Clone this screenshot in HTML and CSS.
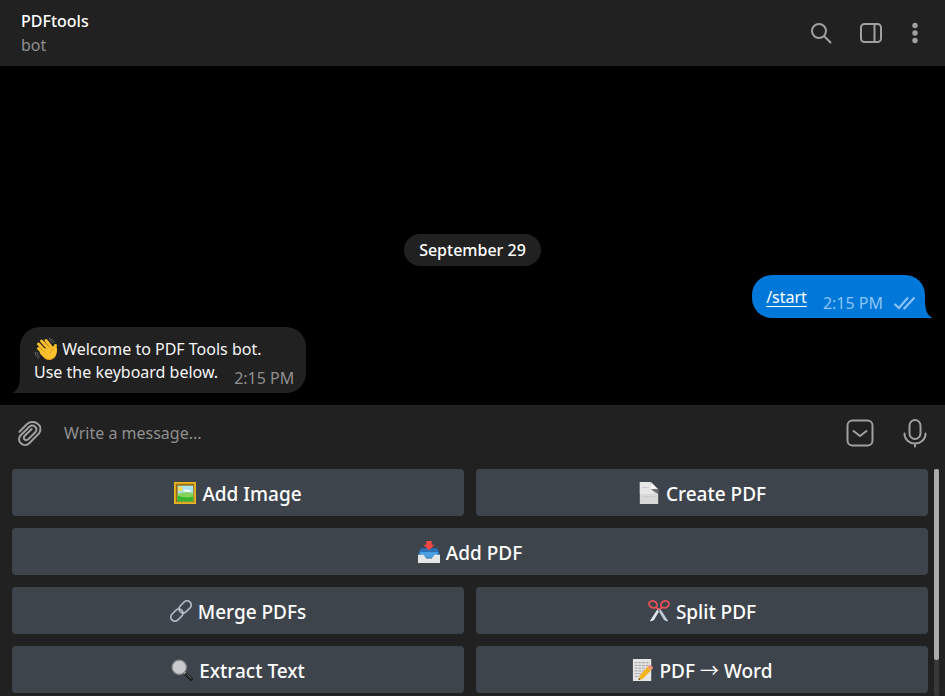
FILE: index.html
```html
<!DOCTYPE html>
<html lang="en">
<head>
<meta charset="utf-8">
<meta name="viewport" content="width=device-width, initial-scale=1">
<title>PDFtools</title>
<link rel="stylesheet" href="styles.css">
</head>
<body>
<header class="topbar">
  <div class="peer">
    <h1 class="peer-name">PDFtools</h1>
    <p class="peer-status">bot</p>
  </div>
  <div class="topbar-actions">
    <button class="icon-button" type="button" aria-label="Search">
      <svg class="icon" viewBox="0 0 24 24"><circle cx="10" cy="10" r="7"/><path d="M15.2 15.2 21.5 21.5"/></svg>
    </button>
    <button class="icon-button" type="button" aria-label="Toggle side panel">
      <svg class="icon" viewBox="0 0 24 24"><rect x="2" y="3" width="20" height="18" rx="3.500"/><path d="M15.500 3v18"/></svg>
    </button>
    <button class="icon-button icon-button-narrow" type="button" aria-label="More">
      <svg class="icon icon-solid" viewBox="0 0 24 24"><circle cx="12" cy="4.500" r="2.700"/><circle cx="12" cy="12" r="2.700"/><circle cx="12" cy="19.500" r="2.700"/></svg>
    </button>
  </div>
</header>

<main class="chat">
  <time class="date-pill">September 29</time>
  <article class="bubble bubble-out">
    <p class="bubble-text"><a class="command" href="#start">/start</a><span class="meta">2:15 PM<svg class="ticks" viewBox="0 0 24 16"><path d="M1.500 9l4.500 4L15 2.500M10.500 12.500l1 .8L21.500 2.500"/></svg></span></p>
    <svg class="tail" viewBox="0 0 18 18"><path d="M0 18h18v-.5C13 15 11 10 11 0H0z"/></svg>
  </article>
  <article class="bubble bubble-in">
    <p class="bubble-text"><svg class="emoji emoji-wave" viewBox="0 0 24 24">
      <g fill="none" stroke="#62625f" stroke-width="1"><path d="M15 1.500q4 .5 5.500 4M15.500 3.500q2.500.5 3.500 3M1 15q0 4 4 6.500M2.800 15q.3 3 2.700 4.800"/></g>
      <g stroke="#fbc02d" stroke-width="3" stroke-linecap="round" fill="none"><path d="M4.500 11.500 11 18M4.500 7 12 15M7.500 4 15 12M12 3.500 18 11"/><path d="M20 14.500Q19.500 11 21.500 8.500"/></g>
      <path fill="#fbc02d" d="M8 13 16 9l4 2.500 2.800-1.500q1 7-2 10.500-4 4-9 1.500Q9 20 5.500 16z"/>
      <path fill="none" stroke="#d58a14" stroke-width=".8" d="M6 10.500 10 14.700M9 7.700 13 12M12.500 6.500 16 10.500M16.500 16q.5-3 3-4.500M10 21q6 3.500 10.500-1"/>
    </svg> Welcome to PDF Tools bot.<br>Use the keyboard below.<span class="meta">2:15 PM</span></p>
    <svg class="tail" viewBox="0 0 18 18"><path d="M18 18H0v-.5C5 15 7 10 7 0h11z"/></svg>
  </article>
</main>

<form class="composer">
  <button class="icon-button" type="button" aria-label="Attach file">
    <svg class="icon icon-large" viewBox="0 0 28 28"><path d="M3.500 12.800 10.800 5.300C16.500-.5 28.500 5.500 23 14.500L13.500 24C8 29.500-.5 22.500 4.500 16.500L13.300 7.700C17.500 4.500 22.500 9 19.500 13L12.300 20.200C9.500 22.500 6.500 19.500 8.500 17L15.700 10"/></svg>
  </button>
  <input class="message-input" type="text" aria-label="Message" placeholder="Write a message...">
  <button class="icon-button" type="button" aria-label="Hide bot keyboard">
    <svg class="icon icon-large" viewBox="0 0 28 28"><rect x="1.500" y="1.500" width="25" height="25" rx="5"/><path d="m7.500 12 6.500 5 6.500-5"/></svg>
  </button>
  <button class="icon-button" type="button" aria-label="Record voice message">
    <svg class="icon icon-large" viewBox="0 0 28 28"><rect x="8.500" y="1" width="11" height="19" rx="5.500"/><path d="M3.500 14.500v.5a10.500 9.500 0 0 0 21 0v-.5M14 24.500v3"/></svg>
  </button>
</form>

<section class="keyboard" aria-label="Bot keyboard">
  <div class="keys">
    <button class="key" type="button"><svg class="emoji" viewBox="0 0 24 24"><path fill="#e6b422" d="M0 0h24v24H0z"/><path fill="#9a6a12" d="M2 2h20v20H2z"/><path fill="#a8e3ee" d="M4 4h17v17H4z"/><path fill="#fff" d="M10 10q2-3 4-1 3-2 4 2z"/><circle cx="7" cy="7.500" r="2.500" fill="#f8d84a"/><path fill="#86d35c" d="M4 13q6-3 17-1v9H4z"/><path fill="#36b52d" d="M4 15q8 3 17 1v5H4z"/></svg> Add Image</button>
    <button class="key" type="button"><svg class="emoji" viewBox="0 0 24 24"><path fill="#d8d8d8" d="M2 0h12l8 8v16H2z"/><path fill="#e6e6e6" d="M2 0h12v8l4 5H2z"/><path fill="#4a4c50" d="M14 0v4l6 4 2 4V8z"/><path fill="#f6f6f6" d="m14 0 8 8q-4-1-8 0z"/><path fill="#6a6c70" d="m14 8 8 5V8q-4-1-8 0z"/><path stroke="#c8c8c8" d="M4 6h8M4 16h15"/></svg> Create PDF</button>
    <button class="key key-wide" type="button"><svg class="emoji" viewBox="0 0 24 24"><path fill="#2c70b5" d="M3 8h18l3 7v4H0v-4z"/><path fill="#4b9fe0" d="M2 12h20l-2 6H4z"/><path fill="#e5e5e5" d="M0 15h6l3 4h6l3-4h6v9H0z"/><path fill="#f04747" d="M9 0h6v4h3l-6 6-6-6h3z"/></svg> Add PDF</button>
    <button class="key" type="button"><svg class="emoji" viewBox="0 0 24 24"><g fill="none" stroke="#7d8c99" stroke-width="2.200"><rect x="9" y="3" width="15" height="9" rx="4.500" transform="rotate(-45 16.500 7.500)"/><rect x="0" y="12" width="15" height="9" rx="4.500" transform="rotate(-45 7.500 16.500)"/></g><g fill="none" stroke="#cfd5da" stroke-width="1"><rect x="9" y="3" width="15" height="9" rx="4.500" transform="rotate(-45 16.500 7.500)"/><rect x="0" y="12" width="15" height="9" rx="4.500" transform="rotate(-45 7.500 16.500)"/></g></svg> Merge PDFs</button>
    <button class="key" type="button"><svg class="emoji" viewBox="0 0 24 24"><path fill="#b9cbd7" d="m11 11 2-2 9 14q-3 1-5-2z"/><path fill="#dce6ec" d="m13 11-2-2L2 23q3 1 5-2z"/><circle cx="12" cy="11.500" r="1" fill="#596873"/><g fill="none" stroke="#e3505a" stroke-width="2"><ellipse cx="5.500" cy="4.800" rx="4.500" ry="3.600" transform="rotate(25 5.500 4.800)"/><ellipse cx="18.500" cy="4.800" rx="4.500" ry="3.600" transform="rotate(-25 18.500 4.800)"/><path d="m8.500 7.500 3 3M15.500 7.500l-3 3"/></g></svg> Split PDF</button>
    <button class="key" type="button"><svg class="emoji" viewBox="0 0 24 24"><path stroke="#aaa" stroke-width="2" d="m14 14 4 4"/><path stroke="#202225" stroke-width="4" stroke-linecap="round" d="m17 17 5 5"/><path stroke="#71777d" d="m17 16 5 5"/><circle cx="9" cy="9" r="7.800" fill="#c9cbcc" stroke="#858a8d" stroke-width="1.500"/></svg> Extract Text</button>
    <button class="key" type="button"><svg class="emoji" viewBox="0 0 24 24"><path fill="#e4e4e4" d="M1 0h20v24H1z"/><path stroke="#999" stroke-dasharray="3 1" d="M3 4h16M3 7h15M3 10h13M3 13h11M3 16h7M3 19h5"/><path fill="#f2b51d" d="M17 8.500 21 12 12 21.500 7 23l1.500-5z"/><path fill="#f08e86" d="m17 8.500 2-2q3 0 4 3.500l-2 2z"/><path fill="#51452b" d="m7 23 .7-2.300 1.500 1.600z"/></svg><span>PDF <span class="arrow">→</span> Word</span></button>
  </div>
  <div class="scroll-track"><div class="scroll-thumb"></div></div>
</section>
</body>
</html>
```
FILE: styles.css
```css
* { box-sizing: border-box; }

body {
  margin: 0;
  height: 100vh;
  display: flex;
  flex-direction: column;
  overflow: hidden;
  background: #000;
  color: #f5f5f5;
  font: 16px/23px "Noto Sans", sans-serif;
}

button, input { font: inherit; color: inherit; }
h1, p { margin: 0; }

.topbar {
  display: flex;
  align-items: center;
  justify-content: space-between;
  height: 66px;
  padding: 0 18px 0 21px;
  background: #212121;
}

.peer-name {
  font-size: 16px;
  font-weight: 500;
  line-height: 24px;
  color: #fff;
}

.peer-status {
  line-height: 24px;
  color: #8f8f8f;
}

.topbar-actions {
  display: flex;
  align-items: center;
  gap: 22px;
}

.icon-button {
  display: flex;
  align-items: center;
  justify-content: center;
  width: 28px;
  height: 28px;
  padding: 0;
  border: 0;
  background: none;
  color: #a0a0a0;
}

.icon-button-narrow {
  width: 24px;
  margin-left: -4px;
}

.icon {
  width: 24px;
  height: 24px;
  flex: none;
  overflow: visible;
  fill: none;
  stroke: currentColor;
  stroke-width: 2;
  stroke-linecap: round;
}

.icon-solid { fill: currentColor; stroke: none; }
.icon-large { width: 28px; height: 28px; }

.chat {
  flex: 1;
  display: flex;
  flex-direction: column;
  justify-content: flex-end;
  align-items: flex-start;
  gap: 9px;
  padding: 12px 20px;
}

.date-pill {
  align-self: center;
  padding: 5px 15px 4px;
  border-radius: 16px;
  background: #212121;
  color: #fff;
  font-weight: 500;
}

.bubble {
  position: relative;
  padding: 11px 12px 9px 14px;
  border-radius: 20px;
}

.bubble-in {
  background: #212121;
  border-bottom-left-radius: 0;
}

.bubble-out {
  align-self: flex-end;
  background: #0078d9;
  border-bottom-right-radius: 0;
  padding-right: 8px;
}

.command { color: #fff; text-underline-offset: 3px; }

.meta {
  position: relative;
  top: 6px;
  margin-left: 16px;
  color: #8f8f8f;
}

.bubble-out .meta { color: #8dc4f2; }

.ticks {
  width: 24px;
  height: 16px;
  margin-left: 10px;
  vertical-align: -2px;
  fill: none;
  stroke: currentColor;
  stroke-width: 2;
}

.tail {
  position: absolute;
  bottom: 0;
  width: 18px;
  height: 18px;
}

.bubble-in .tail { left: -7px; fill: #212121; }
.bubble-out .tail { right: -7px; fill: #0078d9; }

.emoji {
  width: 22px;
  height: 22px;
  margin-bottom: 4px;
  flex: none;
}

.emoji-wave {
  width: 24px;
  height: 24px;
  margin: -4px 0;
  vertical-align: -2px;
}

.composer {
  display: flex;
  align-items: center;
  gap: 27px;
  height: 58px;
  padding: 0 16px 2px;
  background: #212121;
}

.message-input {
  flex: 1;
  min-width: 0;
  margin-left: -7px;
  padding: 0;
  border: 0;
  outline: 0;
  background: none;
}

.message-input::placeholder { color: #8f8f8f; opacity: 1; }

.keyboard {
  display: flex;
  gap: 6px;
  padding: 6px 6px 3px 12px;
  background: #212121;
}

.keys {
  flex: 1;
  display: grid;
  grid-template-columns: 1fr 1fr;
  grid-auto-rows: 47px;
  gap: 12px;
}

.key {
  display: flex;
  align-items: center;
  justify-content: center;
  gap: 6px;
  padding: 4px 0 0;
  border: 0;
  border-radius: 4px;
  background: #3e444b;
  color: #fff;
  font-size: 19px;
  font-weight: 500;
}

.key-wide { grid-column: 1 / -1; }

.arrow {
  font-family: "Noto Sans CJK JP", sans-serif;
  font-weight: 400;
  line-height: 1;
}

.scroll-track {
  width: 5px;
  margin-bottom: -3px;
  border-radius: 2px;
  background: #383838;
}

.scroll-thumb {
  height: 84%;
  border-radius: 2px;
  background: #acacac;
}
```
